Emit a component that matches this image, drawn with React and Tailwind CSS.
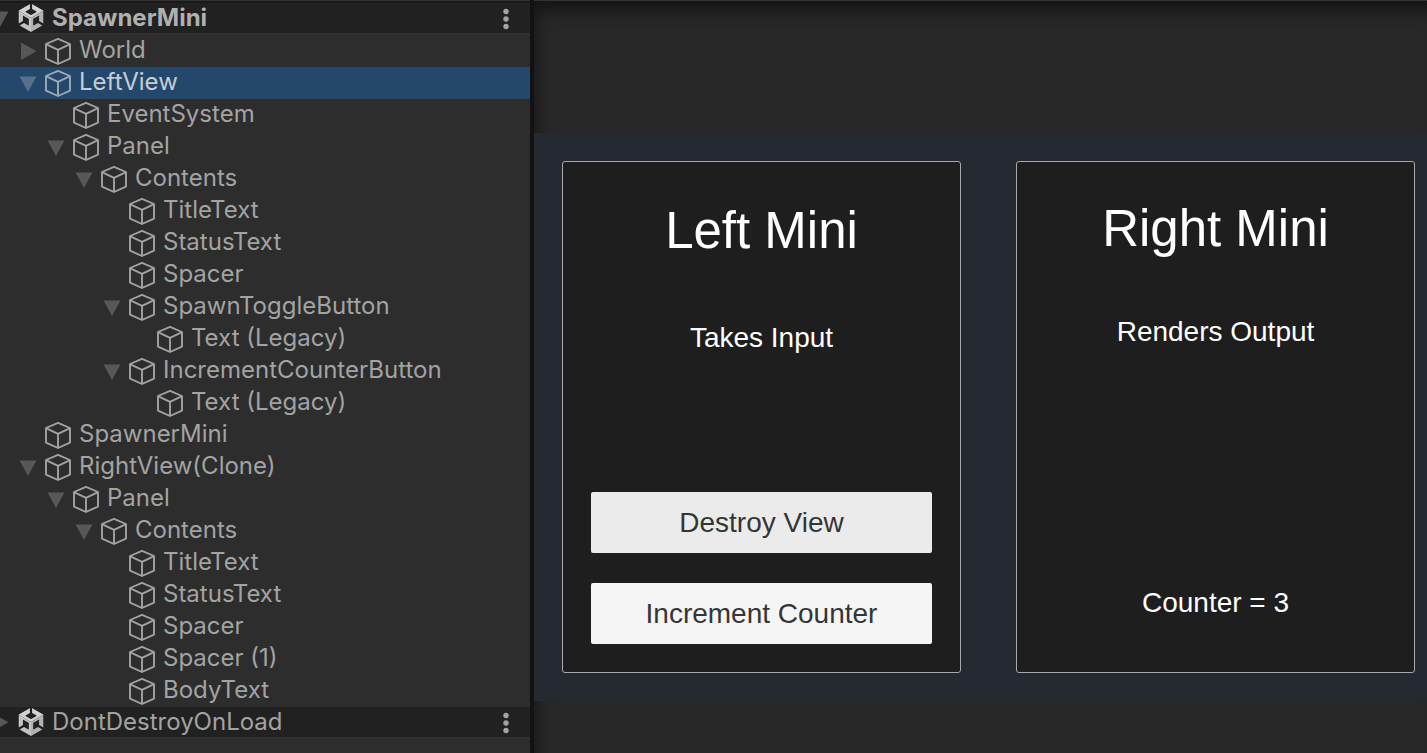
const nodes = [
  { name: "World", depth: 0, state: "closed" },
  { name: "LeftView", depth: 0, state: "open", selected: true },
  { name: "EventSystem", depth: 1 },
  { name: "Panel", depth: 1, state: "open" },
  { name: "Contents", depth: 2, state: "open" },
  { name: "TitleText", depth: 3 },
  { name: "StatusText", depth: 3 },
  { name: "Spacer", depth: 3 },
  { name: "SpawnToggleButton", depth: 3, state: "open" },
  { name: "Text (Legacy)", depth: 4 },
  { name: "IncrementCounterButton", depth: 3, state: "open" },
  { name: "Text (Legacy)", depth: 4 },
  { name: "SpawnerMini", depth: 0 },
  { name: "RightView(Clone)", depth: 0, state: "open" },
  { name: "Panel", depth: 1, state: "open" },
  { name: "Contents", depth: 2, state: "open" },
  { name: "TitleText", depth: 3 },
  { name: "StatusText", depth: 3 },
  { name: "Spacer", depth: 3 },
  { name: "Spacer (1)", depth: 3 },
  { name: "BodyText", depth: 3 },
];

const indents = ["pl-[14px]", "pl-[42px]", "pl-[70px]", "pl-[98px]", "pl-[126px]"];

function Foldout({ state, name, selected }) {
  if (!state) return <span className="w-7 shrink-0" />;
  return (
    <button
      type="button"
      aria-label={`Toggle ${name}`}
      aria-expanded={state === "open"}
      className={`h-7 w-7 shrink-0 ${selected ? "text-[#55708b]" : "text-[#575757]"}`}
    >
      <svg viewBox="0 0 28 28" className="h-7 w-7" fill="currentColor" aria-hidden="true">
        {state === "open" ? <path d="M5.5 7.500h17L14 23z" /> : <path d="M7 5.500v17.500L22.500 14.200z" />}
      </svg>
    </button>
  );
}

function Cube({ selected }) {
  return (
    <svg
      viewBox="0 0 28 28"
      className={`h-7 w-7 shrink-0 ${selected ? "text-[#9da9b4]" : "text-[#a3a3a3]"}`}
      fill="none"
      stroke="currentColor"
      strokeWidth="1.9"
      strokeLinejoin="round"
      aria-hidden="true"
    >
      <path d="M14 1.900 26 7v14.600L14 27 2 21.600V7zM2 7.100 14 12.800 26 7.100M14 12.800V27" />
    </svg>
  );
}

function UnityLogo({ id }) {
  return (
    <svg viewBox="0 0 24 24" className="h-7 w-7 shrink-0" aria-hidden="true">
      <clipPath id={id}>
        <path d="m12.9288 4.2939 3.7997 2.1929c.1366.077.1415.2905 0 .3675l-4.515 2.6076a.4192.4192 0 0 1-.4246 0L7.274 6.8543c-.139-.0745-.1415-.293 0-.3675l3.7972-2.193V0L1.3758 5.5977V16.793l3.7177-2.1456v-4.3858c-.0025-.1565.1813-.2682.318-.1838l4.5148 2.6076a.4252.4252 0 0 1 .2136.3676v5.2127c.0025.1565-.1813.2682-.3179.1838l-3.7996-2.1929-3.7178 2.1457L12 24l9.6954-5.5977-3.7178-2.1457-3.7996 2.1929c-.1341.082-.3229-.0248-.3179-.1838V13.053c0-.1565.087-.2956.2136-.3676l4.5149-2.6076c.134-.082.3228.0224.3179.1838v4.3858l3.7177 2.1456V5.5977L12.9288 0Z" />
      </clipPath>
      <g clipPath={`url(#${id})`}>
        <path fill="#d2d2d2" d="M12-.7 23 5.600 12 12 1 5.600z" />
        <path fill="#c4c4c4" d="M1 5.600 12 12v13L1 18.600z" />
        <path fill="#b2b2b2" d="M23 5.600 12 12v13l11-6.400z" />
      </g>
    </svg>
  );
}

function SceneHeader({ name, state, bold }) {
  return (
    <div className="flex h-8 items-center overflow-hidden border-b-2 border-[#303030] bg-[#212121] pr-[10px]">
      <div className="-ml-[14px] flex items-center">
        <Foldout state={state} name={name} />
      </div>
      <div className="ml-[3px] flex min-w-0 flex-1 items-center gap-[7px]">
        <UnityLogo id={`logo-${name}`} />
        <span className={`leading-7 ${bold ? "font-bold text-[#b0b0b0]" : "text-[#a3a3a3]"}`}>{name}</span>
      </div>
      <button type="button" aria-label={`${name} options`} className="h-7 w-7 shrink-0">
        <svg viewBox="0 0 28 28" className="h-7 w-7" fill="#a3a3a3" aria-hidden="true">
          <circle cx="14" cy="7.500" r="2.700" />
          <circle cx="14" cy="15" r="2.700" />
          <circle cx="14" cy="22.500" r="2.700" />
        </svg>
      </button>
    </div>
  );
}

function TreeRow({ name, depth, state, selected }) {
  return (
    <li className={`flex h-8 items-center ${indents[depth]} ${selected ? "bg-[#24486b]" : ""}`}>
      <Foldout state={state} name={name} selected={selected} />
      <div className="ml-[2px] flex items-center gap-[7px]">
        <Cube selected={selected} />
        <span className={`pb-[2px] leading-7 ${selected ? "text-[#c6cdd3]" : "text-[#a3a3a3]"}`}>{name}</span>
      </div>
    </li>
  );
}

function ViewButton({ children, className }) {
  return (
    <button type="button" className={`h-[61px] w-full rounded-[2px] text-[28px] text-[#353535] ${className}`}>
      {children}
    </button>
  );
}

export default function App() {
  return (
    <div className="flex min-h-screen bg-[#2d2d2d]">
      <aside className="w-[530px] shrink-0 border-t border-[#303030] pt-[2px] font-['Inter',sans-serif] text-[24px] whitespace-nowrap shadow-[inset_0_2px_0_#191919]">
        <SceneHeader name="SpawnerMini" state="open" bold />
        <ul>
          {nodes.map((node, i) => (
            <TreeRow key={i} {...node} />
          ))}
        </ul>
        <SceneHeader name="DontDestroyOnLoad" state="closed" />
      </aside>

      <div className="w-1 shrink-0 bg-[#121212]" />

      <main className="flex min-w-0 flex-1 flex-col border-t border-[#333333] bg-[#282828] font-['Liberation_Sans',Arial,sans-serif] shadow-[inset_8px_16px_16px_-6px_#151515]">
        <div className="mt-[132px] flex gap-[55px] bg-[#252932] py-7 pr-3 pl-7">
          <section className="flex min-h-[512px] flex-1 flex-col items-center rounded-[3px] border border-[#a9a9ad] bg-[#1e1e1e] px-7 pt-[39px] pb-7 text-white">
            <h1 className="text-[51px] leading-[60px]">Left Mini</h1>
            <p className="mt-[61px] text-[28px] leading-8">Takes Input</p>
            <div className="mt-auto flex w-full flex-col gap-[30px]">
              <ViewButton className="bg-[#ebebeb]">Destroy View</ViewButton>
              <ViewButton className="bg-[#f5f5f5]">Increment Counter</ViewButton>
            </div>
          </section>
          <section className="flex min-h-[512px] flex-1 flex-col items-center rounded-[3px] border border-[#a9a9ad] bg-[#1e1e1e] px-7 pt-[37px] pb-[53px] text-white">
            <h1 className="text-[51px] leading-[60px]">Right Mini</h1>
            <p className="mt-[57px] text-[28px] leading-8">Renders Output</p>
            <p className="mt-auto text-[28px] leading-8">Counter = 3</p>
          </section>
        </div>
      </main>
    </div>
  );
}
